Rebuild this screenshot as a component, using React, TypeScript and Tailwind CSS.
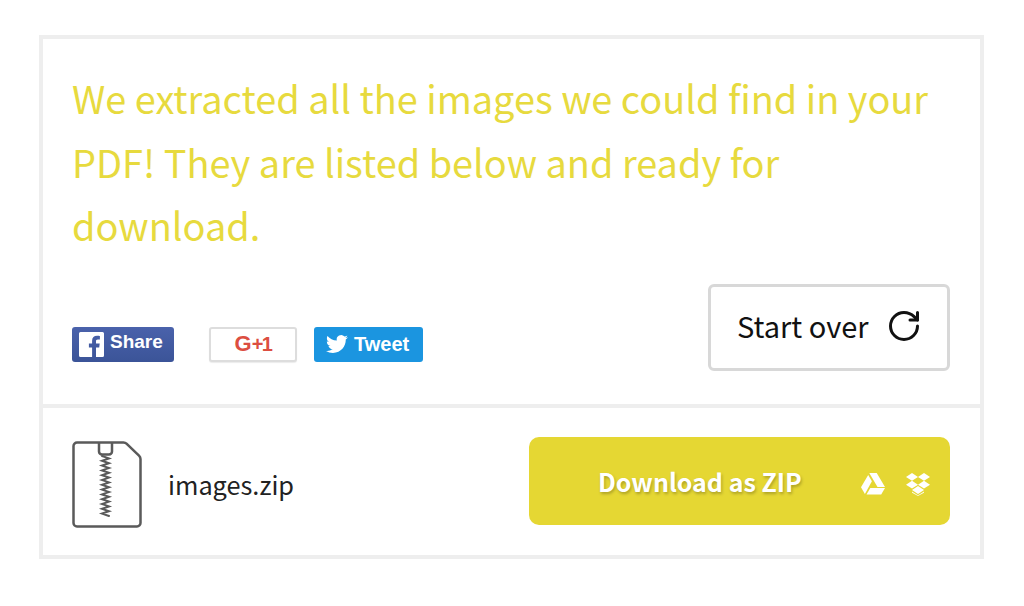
import { RotateCw } from "lucide-react";

const sans = "font-['Noto_Sans_CJK_SC','Liberation_Sans',sans-serif]";
const arial = "font-['Liberation_Sans',Arial,sans-serif]";

function FacebookGlyph() {
  return (
    <svg viewBox="0 0 25 25" className="h-[25px] w-[25px]">
      <path
        fill="#fff"
        d="M1.5 0h22A1.5 1.5 0 0 1 25 1.5v22a1.5 1.5 0 0 1-1.5 1.5H17v-9.6h3.2l.5-3.8H17V9.2c0-1.1.3-1.8 1.9-1.8h2V4c-.4 0-1.500-.2-2.900-.2-2.900 0-4.900 1.800-4.900 5v2.800H9.900v3.800h3.200V25H1.500A1.500 1.500 0 0 1 0 23.500v-22A1.500 1.500 0 0 1 1.500 0z"
      />
    </svg>
  );
}

function TwitterGlyph() {
  return (
    <svg viewBox="0 0 24 24" className="h-[22px] w-[22px]">
      <path
        fill="#fff"
        d="M23.950 4.570a10 10 0 0 1-2.820.770 4.960 4.960 0 0 0 2.160-2.720c-.950.550-2.010.960-3.130 1.190a4.920 4.920 0 0 0-8.380 4.480C7.690 8.100 4.070 6.130 1.640 3.160a4.820 4.820 0 0 0-.660 2.470c0 1.710.870 3.210 2.190 4.100a4.900 4.900 0 0 1-2.230-.610v.060a4.920 4.920 0 0 0 3.950 4.830 4.940 4.940 0 0 1-2.210.080 4.940 4.940 0 0 0 4.600 3.420A9.870 9.870 0 0 1 0 19.540a14 14 0 0 0 7.560 2.210c9.050 0 14-7.500 14-13.980 0-.210 0-.420-.020-.630a9.940 9.940 0 0 0 2.460-2.550z"
      />
    </svg>
  );
}

function ZipFileIcon() {
  return (
    <svg viewBox="0 0 70 87" className="mt-[7px] h-[87px] w-[70px]" fill="none" stroke="#5a5a5a" strokeWidth="2.500">
      <path d="M5 1.500h46.500c1.200 0 2.200.4 3 1.200l12.500 12c1 1 1.500 2.100 1.500 3.300V82a3.500 3.500 0 0 1-3.500 3.500H5A3.500 3.500 0 0 1 1.500 82V5A3.500 3.500 0 0 1 5 1.500z" />
      <path d="M27 2v8.500a3 3 0 0 0 3 3h7a3 3 0 0 0 3-3V2" />
      <path
        strokeWidth="2"
        strokeLinecap="round"
        d="M30 15l7 2.400-7 2.400 7 2.400-7 2.400 7 2.400-7 2.400 7 2.400-7 2.400 7 2.400-7 2.400 7 2.400-7 2.400 7 2.400-7 2.400 7 2.400-7 2.400 7 2.400-7 2.400 7 2.400-7 2.400 7 2.400-7 2.400 7 2.400-7 2.400 7 2.400"
      />
    </svg>
  );
}

function DriveIcon() {
  return (
    <svg viewBox="0 0 24 22" className="h-[22px] w-[24px]" fill="#fff">
      <path d="M8.300 0h7.400l8.300 14h-7.500z" />
      <path d="M7.200 1.900l3.700 6.300L3.900 21 0 14.300z" />
      <path d="M9.300 15h14.700l-3.800 6.500H5.500z" />
    </svg>
  );
}

function DropboxIcon() {
  return (
    <svg viewBox="0 0 24 23" className="h-[23px] w-[24px]" fill="#fff">
      <path d="M6 0l6 3.900-6 3.900-6-3.900zM18 0l6 3.900-6 3.900-6-3.900zM0 11.700l6-3.900 6 3.900-6 3.900zM18 7.800l6 3.900-6 3.900-6-3.900z" />
      <path d="M6 17l6-3.900 6 3.900-6 3.900z" />
      <path d="M6 18.400l6 3.900 6-3.900v1.400l-6 3.200-6-3.200z" opacity="0.900" />
    </svg>
  );
}

export default function App() {
  return (
    <div className={`min-h-[606px] bg-white px-[39px] pt-[35px] ${sans}`}>
      <div className="h-[524px] w-[945px] border-4 border-[#eeeeee]">
        <section className="h-[369px] border-b-4 border-[#eeeeee] pt-[27px] pr-[30px] pl-[29px]">
          <p className="w-[880px] text-[37.900px] leading-[63.500px] font-normal text-[#e7da3e]">
            We extracted all the images we could find in your PDF! They are listed below and ready for download.
          </p>
          <div className="mt-[27px] flex items-start justify-between">
            <div className={`mt-[43px] flex items-start ${arial}`}>
              <a className="flex h-[35px] w-[102px] items-center gap-[6px] rounded-[3px] bg-gradient-to-b from-[#4a62ab] to-[#3b5498] pl-[7px] text-[19px] font-bold text-white">
                <FacebookGlyph />
                <span className="-mt-[3px]">Share</span>
              </a>
              <a className="ml-[35px] flex h-[35px] w-[88px] items-center justify-center rounded-[3px] border-2 border-[#dddddd] bg-white font-bold text-[#dc4e41] shadow-[0_1px_1px_rgba(0,0,0,0.08)]">
                <span className="text-[22px] leading-none">G</span>
                <span className="text-[20px] leading-none tracking-[-1.500px]">+1</span>
              </a>
              <a className="ml-[17px] flex h-[35px] w-[109px] items-center gap-[6px] rounded-[3px] bg-[#1b95e0] pl-[12px] text-[20px] font-bold text-white">
                <TwitterGlyph />
                <span>Tweet</span>
              </a>
            </div>
            <button className="flex h-[87px] w-[242px] items-center gap-[17px] rounded-[6px] border-[3px] border-[#d8d8d8] bg-white pb-[2px] pl-[26px] text-[29px] font-normal text-[#111111]">
              <span>Start over</span>
              <RotateCw className="h-[36px] w-[36px]" strokeWidth={2} />
            </button>
          </div>
        </section>
        <section className="flex h-[146px] items-center justify-between pr-[30px] pl-[29px]">
          <div className="flex items-center gap-[26px]">
            <ZipFileIcon />
            <span className="mt-[7px] text-[25.300px] font-normal text-[#222222]">images.zip</span>
          </div>
          <button className="flex h-[88px] w-[421px] items-center rounded-[10px] bg-[#e5d733] pl-[69px] text-left text-white">
            <span className="mt-[2px] w-[263px] text-[25px] font-bold [text-shadow:1px_2px_3px_rgba(0,0,0,0.25)]">
              Download as ZIP
            </span>
            <span className="mt-[6px]">
              <DriveIcon />
            </span>
            <span className="mt-[6px] ml-[21px]">
              <DropboxIcon />
            </span>
          </button>
        </section>
      </div>
    </div>
  );
}
